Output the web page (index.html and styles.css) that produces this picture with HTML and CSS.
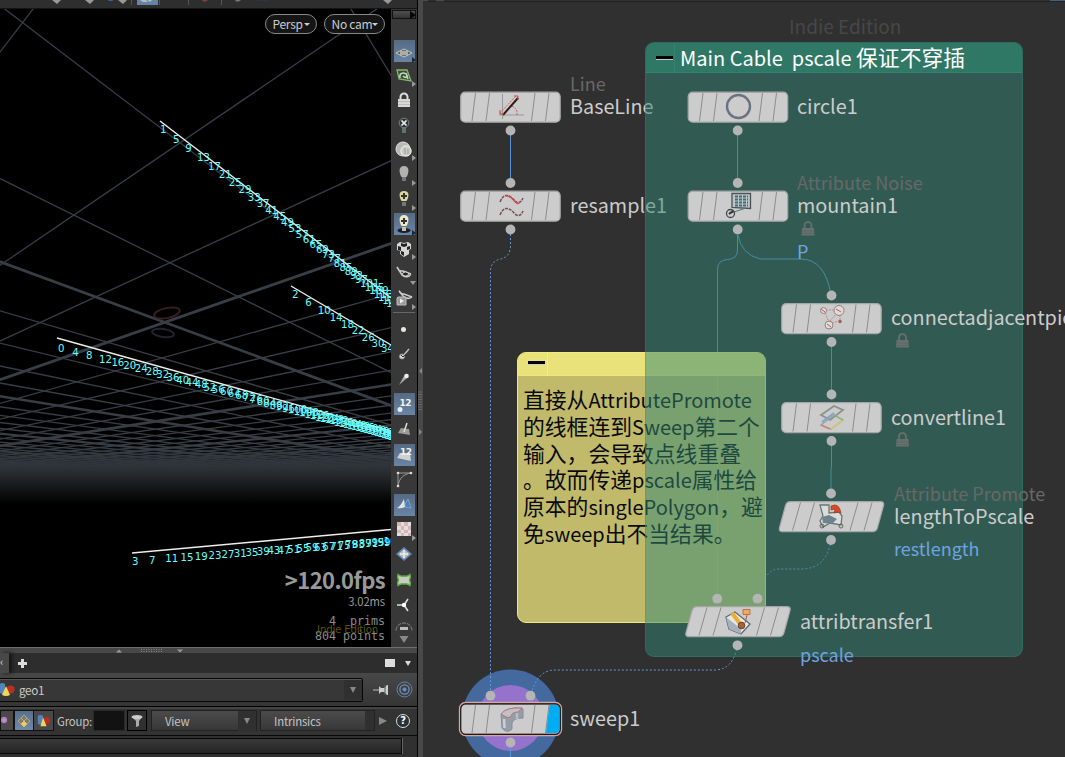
FILE: index.html
```html
<!DOCTYPE html>
<html lang="zh-CN">
<head>
<meta charset="utf-8">
<title>geo1</title>
<link rel="stylesheet" href="styles.css">
</head>
<body>
<main class="app">
<section class="left">
  <header class="topstrip">
    <svg width="418" height="9" viewBox="0 0 418 9">
      <g fill="#999"><path d="M52 0h9l-4 4z"/><path d="M85 0h9l-4 4z"/><path d="M118 0h9l-4 4z"/><path d="M383 0h9l-4 4z"/></g>
      <path d="M108 0h6l-2 1h-3z" fill="#38639a"/><path d="M202 0h6l-2 1.500h-3z" fill="#8a3c38"/><path d="M235 0h6l-2 1.500h-3z" fill="#777"/><path d="M254 0h14" stroke="#2c3d4b"/>
      <rect x="137" y="0" width="21" height="5" fill="#6484aa"/><path d="M140 0h6l2 2h-5zM147 0h5l-2 2z" fill="#b9bcb5"/>
      <path d="M131.500 0v5M159.500 0v5M188.500 0v5M221.500 0v5" stroke="#555"/>
      <path d="M372 0h10v1h-10z" fill="#25333d"/>
    </svg>
  </header>
  <div class="scene">
    <div class="viewport">
      <svg id="grid" class="grid" width="391" height="638" viewBox="0 9 391 638"></svg>
      <div class="cams"><span class="pill">Persp<i></i></span><span class="pill wide">No cam<i></i></span></div>
      <div class="stats">
        <div class="fps">&gt;120.0fps</div>
        <div class="ms">3.02ms</div>
        <div class="counts"><span>4&nbsp; prims</span><span>804 points</span><em>Indie Edition</em></div>
      </div>
    </div>
    <aside class="tools">
      <div class="expand"><i></i></div>
      <div class="group first">
        <div class="t on"><svg viewBox="0 0 24 24"><path d="M4 14l8-4 8 4-8 4z" fill="#505c62" stroke="#c8c9bd"/><path d="M8 14l4-2 4 2-4 2zM8 12l8 4M16 12l-8 4" stroke="#d5d6ca" fill="none" stroke-width=".8"/></svg><b></b></div>
        <div class="t"><svg viewBox="0 0 24 24"><path d="M5 6l10 0 4 11-12-2z" fill="#365130" stroke="#85b66c" stroke-width="1.300"/><path d="M8 14c-1-5 3-6 6-4s0 5-3 2M14 9l2 6" fill="none" stroke="#c8d3c8" stroke-width="1.500"/></svg><b></b></div>
        <div class="t"><svg viewBox="0 0 24 24"><path d="M8.500 12V9a3.500 3.500 0 0 1 7 0v3" fill="none" stroke="#ddd" stroke-width="2"/><path d="M6 11h12v8H6z" fill="#d9d8d4"/><path d="M6 13.500h12M6 16.500h12" stroke="#bbb"/></svg></div>
        <div class="t"><svg viewBox="0 0 24 24"><circle cx="12" cy="10" r="4.800" fill="#303638" stroke="#738080"/><path d="M9.500 7.500l5 5m0-5l-5 5" stroke="#eee" stroke-width="1.700"/><path d="M10 15h4v5h-4z" fill="#667070"/></svg></div>
        <div class="t"><svg viewBox="0 0 24 24"><circle cx="11" cy="11" r="7" fill="#b6bbb7" stroke="#e2e4df"/><circle cx="14" cy="13" r="5.200" fill="#c8cdc7" stroke="#f0f0e8"/><path d="M13 10v6m3-5v5" stroke="#999"/></svg><b></b></div>
        <div class="t"><svg viewBox="0 0 24 24"><path d="M12 4c-6 0-5 7-2.500 11h5C17 11 18 4 12 4z" fill="#b2b3ad"/><path d="M10 15h4v4h-4z" fill="#777"/></svg><b></b></div>
        <div class="t"><svg viewBox="0 0 24 24"><path d="M12 4c-6 0-5 6-2.500 10h5C17 10 18 4 12 4z" fill="#d9d99a"/><path d="M12 6v6m-3-3h6" stroke="#333" stroke-width="2"/><path d="M10 15h4v4h-4z" fill="#777"/></svg><b></b></div>
        <div class="t on"><svg viewBox="0 0 24 24"><ellipse cx="12" cy="18.500" rx="6.500" ry="2.500" fill="#17202b"/><path d="M12 3c-6 0-5 7-2.500 11h5C17 10 18 3 12 3z" fill="#eee9c5"/><path d="M12 6v6m-3-3h6" stroke="#333" stroke-width="2"/><path d="M10 15h4v4h-4z" fill="#c9c5a9"/></svg><b></b></div>
        <div class="t"><svg viewBox="0 0 24 24"><path d="M5 7l3-2 4 1 4-1 3 2v5l-2 1v4l-5 3-4-3v-3l-3-1z" fill="#d6d6d2"/><path d="M9 6l3 1 3-1v3l-3 1-3-1zM6 9l3 1v4l-3-1zM18 9l-3 1v3l3-1zM9 14l3 1v4l-3-2z" fill="#222"/></svg><b></b></div>
        <div class="t"><svg viewBox="0 0 24 24"><path d="M5 6l5 8c3 3 7 2 9-1M5 6c2 5 5 4 6 4l8 3" fill="none" stroke="#c9c9c4" stroke-width="1.600"/><ellipse cx="13.500" cy="13" rx="3" ry="2" fill="#222" stroke="#ddd"/></svg><b class="down"></b></div>
        <div class="t"><svg viewBox="0 0 24 24"><path d="M7 5l4 5c3 3 6 3 9 1M7 5c2 3 4 3 5 3l8 3" fill="none" stroke="#ccc" stroke-width="1.500"/><path d="M5 12l1-1h8v8H5z" fill="#999" stroke="#bbb"/><path d="M8 12.500l4 2.500-4 2.500z" fill="#eee"/></svg><b></b></div>
      </div>
      <hr>
      <div class="group second">
        <div class="t"><svg viewBox="0 0 24 24"><circle cx="11.500" cy="12.500" r="2.500" fill="#e8e8e0"/></svg></div>
        <div class="t"><svg viewBox="0 0 24 24"><path d="M11 14l6-7" stroke="#bbb" stroke-width="1.500"/><circle cx="10" cy="14.500" r="2.500" fill="#ddd" stroke="#999"/><path d="M9 13l2 2 3-3" stroke="#333" fill="none"/></svg></div>
        <div class="t"><svg viewBox="0 0 24 24"><path d="M7 18l5-9 3 2z" fill="#aaa"/><circle cx="14.500" cy="9" r="2.300" fill="#f0f0e8"/></svg></div>
        <div class="t on"><svg viewBox="0 0 24 24"><text x="7.500" y="13.500" class="ic">12</text><circle cx="8" cy="17.500" r="2.500" fill="#eee"/></svg></div>
        <div class="t"><svg viewBox="0 0 24 24"><path d="M9 11l8 1 1 6-12-2z" fill="#9b9c98"/><path d="M12 15l3-9" stroke="#ddd" stroke-width="1.500"/></svg></div>
        <div class="t on"><svg viewBox="0 0 24 24"><path d="M8 11h10l1 8-14-3z" fill="#d0d0cc"/><text x="8" y="12.500" class="ic">12</text></svg></div>
        <div class="t"><svg viewBox="0 0 24 24"><path d="M6 19V6h13M6 19C7 11 12 7 19 6" fill="none" stroke="#999"/><g fill="#ddd"><circle cx="6" cy="6" r="1.300"/><circle cx="6" cy="19" r="1.300"/><circle cx="19" cy="6" r="1.300"/></g></svg></div>
        <div class="t on"><svg viewBox="0 0 24 24"><path d="M5 16q3-1 7-9l1 8q-4 2-8 1z" fill="#e4e4e0"/><path d="M13 12l3-5 3 9-6-1z" fill="#4d7fc0" stroke="#9dbbdc" stroke-width=".6"/></svg></div>
        <div class="t"><svg viewBox="0 0 24 24"><path d="M5 5h14v14H5z" fill="#dde0e2"/><path d="M5 5h4v4H5zM12 5h4v4h-4zM9 9h3v4H9zM16 9h3v4h-3zM5 13h4v3H5zM12 13h4v3h-4zM9 16h3v3H9zM16 16h3v3h-3z" fill="#dcb3ae"/></svg><b></b></div>
        <div class="t"><svg viewBox="0 0 24 24"><path d="M5 12l7-6 7 6-7 6z" fill="#b8bab4" stroke="#5a83b6" stroke-width="1.400"/><path d="M12 8v8M8 12h8" stroke="#eee" stroke-width="1.500"/></svg></div>
        <div class="t"><svg viewBox="0 0 24 24"><path d="M6 6.500q3 2.500 6 1.500 3 1 6-1.500 1 2-.5 5.500 1.500 3.500 .5 5.500-3-2.500-6-1.500-3-1-6 1.500-1-2 .5-5.500-1.500-3.500-.5-5.500z" fill="#c8cac4" stroke="#67ad43" stroke-width="1.500"/></svg></div>
        <div class="t"><svg viewBox="0 0 24 24"><path d="M12 12l4-6M12 12l4 6M12 12H5" stroke="#ddd" stroke-width="1.600"/><circle cx="12" cy="12" r="2.200" fill="#fff"/></svg></div>
        <div class="t"><svg viewBox="0 0 24 24"><path d="M4 12.500a8 7.500 0 0 1 16 0" fill="none" stroke="#888" stroke-dasharray="4 1"/><path d="M8 9h8v3H8z" fill="#bbb"/><path d="M7.500 18h9l-4.500 7z" fill="#888"/></svg></div>
      </div>
    </aside>
  </div>
  <div class="split"><svg width="100" height="6" viewBox="0 0 100 6"><path d="M1 4.500h6l-3-3zM62 1.500h6l-3 3z" fill="#999"/><path d="M26 1.500h21M26 3.500h21M26 5.500h21" stroke="#888" stroke-dasharray="1 1.500"/></svg></div>
  <div class="tabs"><span class="tab">‹</span><span class="plus"></span><span class="max"></span><span class="tri"></span></div>
  <div class="pathrow">
    <div class="path"><svg width="15" height="16" viewBox="0 0 15 16"><path d="M0 2q2-2 5 0v9q-2 2-5 0z" fill="#5384bb"/><circle cx="10.500" cy="7.500" r="4" fill="#b83022"/><path d="M6 4l4 9q-4 2-8 0z" fill="#f1d759"/></svg><span>geo1</span><i class="drop"></i></div>
    <svg class="pin" width="18" height="14" viewBox="0 0 18 14"><path d="M0 7h7" stroke="#bbb"/><path d="M6 3l2 2h3l3-3h1v10h-1l-3-3H8l-2 2z" fill="#ccc"/><path d="M12 2v10" stroke="#555"/></svg>
    <svg width="17" height="17" viewBox="0 0 17 17" fill="none" stroke="#5d85b7"><circle cx="8.500" cy="8.500" r="7.500"/><circle cx="8.500" cy="8.500" r="4.600" stroke="#768fac" stroke-width="1.300"/><circle cx="8.500" cy="8.500" r="1.700" fill="#5c9be4"/></svg>
  </div>
  <div class="grouprow">
    <span class="sq one"><svg width="8" height="12" viewBox="0 0 8 12"><circle cx="3" cy="5" r="2.500" fill="#aaa" stroke="#b675bb" stroke-width="1.500"/></svg></span>
    <span class="sq sel"><svg width="16" height="16" viewBox="0 0 16 16"><path d="M2 8l6-6 6 6-6 6z" fill="#847d5c" stroke="#aaa78f"/><path d="M5 5l6 6M11 5l-6 6" stroke="#aaa"/><path d="M5 11l3-3 3 3-3 3z" fill="#f2cd58"/></svg></span>
    <span class="sq two"><svg width="15" height="14" viewBox="0 0 15 16"><path d="M1 2q3-2 6 0v9q-3 2-6 0z" fill="#5384bb"/><circle cx="11" cy="7.500" r="4" fill="#b83022"/><path d="M7 4l4 10H4z" fill="#f1d759"/></svg></span>
    <label>Group:</label><span class="field"></span>
    <span class="filter"><svg width="12" height="14" viewBox="0 0 12 14"><path d="M1 3l4 4v6l3-1V7l3-4z" fill="#aaa"/><ellipse cx="6" cy="3" rx="5.500" ry="2" fill="#ccc"/></svg></span>
    <span class="combo">View<i class="drop"></i></span>
    <span class="combo intr">Intrinsics</span>
    <i class="play"></i><span class="help">?</span>
  </div>
  <div class="sheet"><div></div></div>
</section>
<div class="divider"><svg width="5" height="757" viewBox="0 0 5 757"><path d="M4 368v6l-3-3zM1 429l3 3-3 3z" fill="#888"/><path d="M1 391.500v20M3 391.500v20" stroke="#888" stroke-dasharray="1 1.500"/></svg></div>
<section class="network">
  <svg class="layer" viewBox="423 0 642 757">
    <path d="M423 .5h642" stroke="#4a4a4a"/><path d="M428 1h8M444 1h621" stroke="#171717"/><path d="M1050 0h15v1h-15z" fill="#49607d"/>
    <text class="brand" x="789" y="34">Indie Edition</text>
    <circle cx="510.500" cy="718" r="48.500" fill="#44699f"/><circle cx="510.500" cy="718" r="33" fill="#9572cc"/>
    <g class="wire">
      <path d="M510.500 130v53M737.500 130v53"/>
      <path class="dot" d="M510.500 230v15q0 12-10 14t-10 13v423"/>
      <path d="M737.500 235v15q0 9-10 9.500t-10 10V599M738 235q3 19 22 24h41q24 0 30 36M831.500 342v52M831.500 441v25l-.5 3v24"/>
      <path class="dot" d="M831 540q-4 29-30 29h-22q-16 0-21 30M737.500 645q-4 25-23 25H555q-18 0-24 25"/>
      <path d="M510.500 742v15"/>
    </g>
    <text class="kind" x="570" y="91">Line</text><text class="name" x="570" y="114">BaseLine</text><text class="name" x="570" y="213">resample1</text>
  </svg>
  <article class="note yellow"><h2><i></i></h2><p>直接从<span>AttributePromote</span><br>的线框连到<span>Sweep</span>第二个<br>输入，会导致点线重叠<br>。故而传递<span>pscale</span>属性给<br>原本的<span>singlePolygon</span>，避<br>免<span>sweep</span>出不当结果。</p></article>
  <article class="note green"><h2><i></i><span>Main Cable&nbsp; pscale <b>保证不穿插</b></span></h2></article>
  <svg class="layer" viewBox="423 0 642 757">
    <defs>
      <g id="node"><rect x=".7" y=".7" width="99.500" height="30" rx="4.500" fill="#ccc" stroke="#a6a6a6" stroke-width="1.200"/><path d="M15.500 1.500l-3.500 28M29.500 1.500l-3.500 28M75 1.500l-3.500 28M89 1.500l-3.500 28" stroke="#8c8c8c" fill="none"/></g>
      <g id="slant"><path d="M12 .7h90q4 0 3 4l-6 22q-1 4-5 4H4q-4 0-3-4L7 4.500q1-3.800 5-3.800z" fill="#ccc" stroke="#a6a6a6" stroke-width="1.200"/><path d="M22 1.500l-8 28M36 1.500l-8 28M79.500 1.500l-8 28M93.500 1.500l-8 28" stroke="#8c8c8c" fill="none"/></g>
      <g id="lock"><path d="M3.500 7V4.500a3.500 3.500 0 0 1 7 0V7" fill="none" stroke="#626e68" stroke-width="2"/><path d="M1 7h12l.5 7.500H.5z" fill="#66706d"/><path d="M1 10h12M1 12.500h12" stroke="#5d6764"/></g>
    </defs>
    <use href="#node" x="460" y="91.500"/><use href="#node" x="460" y="190.500"/><use href="#node" x="687.500" y="91.500"/><use href="#node" x="687.500" y="190.500"/><use href="#node" x="781" y="303"/><use href="#node" x="781" y="402"/><use href="#slant" x="778.500" y="501"/><use href="#slant" x="685" y="606"/>
    <rect x="459.500" y="702.500" width="102" height="33" rx="6" fill="#1d1717" stroke="#dda4a0" stroke-width="1.300"/><use href="#node" x="460" y="703.500"/>
    <path d="M549.500 705H556q3.500 0 3.500 4v20q0 4-4 4h-9.500z" fill="#00adf4"/>
    <rect x="460.700" y="703.900" width="99.600" height="30.400" rx="5" fill="none" stroke="#1d1717" stroke-width="1.200"/>
    <g fill="#b5b5b5"><circle cx="510.500" cy="130.500" r="4.900"/><circle cx="510.500" cy="183" r="4.900"/><circle cx="510.500" cy="229.500" r="4.900"/><circle cx="737.700" cy="130.500" r="4.900"/><circle cx="737.700" cy="183" r="4.900"/><circle cx="737.700" cy="229.500" r="4.900"/><circle cx="831.500" cy="295.500" r="4.900"/><circle cx="831.500" cy="342" r="4.900"/><circle cx="831.500" cy="394.500" r="4.900"/><circle cx="831.500" cy="441" r="4.900"/><circle cx="831" cy="493.500" r="4.900"/><circle cx="831" cy="540" r="4.900"/><circle cx="717.300" cy="598.700" r="4.900"/><circle cx="757.500" cy="598.700" r="4.900"/><circle cx="737.500" cy="645.300" r="4.900"/><circle cx="490.500" cy="695.700" r="4.900"/><circle cx="530.500" cy="695.700" r="4.900"/><circle cx="510.500" cy="742.500" r="4.900"/></g>
    <g fill="none">
      <path d="M502.500 94v25M499 115h25" stroke="#999"/><path d="M500 113l16-17M512 106q6 3 5 9" stroke="#cf5c5c" stroke-dasharray="2 1"/><path d="M503 115l15-17" stroke="#31191b" stroke-width="2"/><path d="M500 110v4h4M514 96h4v4" stroke="#ba4c50"/>
      <path d="M500 202q3-7 7-6.500t8 5.500q5 4 8-3M500 215q3-7 7-6.500t8 5.500q5 4 8-3" stroke="#7a5052" stroke-width="1.500" stroke-dasharray="3 1"/><path d="M506 195.500q4 .5 8 5t5 2.500" stroke="#cd4b4d" stroke-width="1.300"/>
      <circle cx="738.500" cy="106.500" r="11.500" stroke="#6c7280" stroke-width="2.400"/>
      <path d="M732 193.500h18.500v15l-18.500-1z" fill="#b9c7ca" stroke="#4b5357" stroke-width="1.300"/><path d="M735 196.500h13M735 199.500h13M735 202.500h13M735 205.500h13" stroke="#4c6970" stroke-width="2" stroke-dasharray="3 1"/><path d="M731 213l15-5" stroke="#59747a"/><circle cx="730.500" cy="213.500" r="4" stroke="#44494b" stroke-width="1.300"/><path d="M729 214l4-3" stroke="#333" stroke-width="2"/>
      <g stroke="#8b8585" fill="#dedbd9"><circle cx="823.500" cy="310.500" r="3"/><circle cx="839" cy="310.500" r="5"/><circle cx="829" cy="325" r="4"/></g><circle cx="840" cy="321.500" r="1.700" fill="#9b5c55"/><path d="M826 310h8M825 313l4 9M840 315v5M830 321l6-7M832 323l7-2" stroke="#c68683" stroke-dasharray="2 1"/><path d="M821 309l4 3M836 309l5 3M827 324l4 3" stroke="#bf5c58"/>
      <path d="M821 415l13-9 9 4-13 10z" stroke="#8b918b" stroke-width="1.800"/><path d="M821 425l13-10 9 5-12 9z" stroke="#9ca29c" stroke-width="1.300"/><path d="M822 422l12-9" stroke="#7ea4cf" stroke-width="1.700"/><path d="M821 425l9 4" stroke="#cf817b" stroke-width="1.600"/><path d="M831 429l12-9" stroke="#d0c66e" stroke-width="1.600"/><path d="M834 415l9 5" stroke="#86b278" stroke-width="1.300"/>
      <path d="M820 505h9v8l10-1 3 4-1 9-11-2-7 4-3-6 3-5z" fill="#d9dddb" stroke="#6a7578" stroke-width="1.300"/><path d="M822 517l7-2 8 4-5 5-9-1z" fill="#72828a"/><path d="M831 506q8-4 10 7l-3-1-4 1 1-4-4 1z" fill="#dc4826" stroke="#88412d" stroke-width=".7"/><circle cx="822" cy="526" r="2" stroke="#666"/><circle cx="841" cy="526" r="2" stroke="#666"/>
      <path d="M726 617l9-5 15 12-9 10-12-5z" fill="#e6e8e5" stroke="#5e6970" stroke-width="1.300"/><path d="M726 617l3 12 12 5v-5z" fill="#a6b1ba"/><path d="M732 613l9 12" stroke="#eaae35" stroke-width="4"/><circle cx="741.500" cy="625.500" r="3.300" fill="#a96237" stroke="#69412d"/><path d="M743 609.500h7v5h-7z" fill="#e4ad6d" stroke="#cc6c35"/><path d="M747 615l-2 8" stroke="#a15836"/>
      <path d="M501 714q5-7 21-6l1 1v9q-10 0-11 5v6q-4 4-8 1l-2-2z" fill="#949da8" stroke="#858d97"/><path d="M501 714q5-7 21-6l-4 4q-6 0-7 4t-10-2z" fill="#bcc2c8" stroke="#cb6972" stroke-width=".9"/><path d="M504 719l.5 9" stroke="#ccd0d6" stroke-width="2.500"/><path d="M517 713v6" stroke="#b6bec6" stroke-width="2.500"/>
    </g>
    <use href="#lock" x="801" y="221"/><use href="#lock" x="895.500" y="333"/><use href="#lock" x="895.500" y="432"/>
    <text class="name" x="797" y="114">circle1</text><text class="kind" x="797" y="190">Attribute Noise</text><text class="name" x="797" y="213">mountain1</text><text class="attr" x="797" y="259">P</text>
    <text class="name" x="891" y="325">connectadjacentpieces1</text><text class="name" x="891" y="425">convertline1</text>
    <text class="kind" x="894" y="501">Attribute Promote</text><text class="name" x="894" y="524">lengthToPscale</text><text class="attr" x="894" y="556">restlength</text>
    <text class="name" x="800" y="629">attribtransfer1</text><text class="attr" x="800" y="662">pscale</text><text class="name" x="570" y="726">sweep1</text>
  </svg>
</section>
</main>
<script src="scene.js"></script>
</body>
</html>
```
FILE: styles.css
```css
* { box-sizing: border-box; }
body { margin: 0; background: #303030; font-family: "Noto Sans CJK SC", "Noto Sans", sans-serif; overflow: hidden; }
svg { display: block; }
.app { display: flex; width: 1065px; height: 757px; overflow: hidden; }
.left { width: 418px; height: 757px; border-right: 1px solid #000; background: #2d2d2d; flex: none; }
.topstrip { height: 9px; background: #2e2e2e; border-bottom: 1px solid #141414; overflow: hidden; }
.scene { display: flex; height: 638px; }
.viewport { width: 391px; background: #000; position: relative; }
.grid { position: absolute; left: 0; top: 0; }
.pt { font: 10.200px "DejaVu Sans", sans-serif; fill: #66ffff; }
.cams { position: relative; display: flex; justify-content: flex-end; gap: 7px; padding: 5px 6px 0 0; }
.pill { width: 52px; height: 20px; border: 1px solid #888; border-radius: 10px; background: #151515; color: #ccc; font-size: 12px; letter-spacing: -.3px; line-height: 17px; padding: 0 6px 0 6.500px; display: flex; justify-content: space-between; white-space: nowrap; }
.pill.wide { width: 61px; }
.pill i { border: 3px solid transparent; border-top-color: #ccc; margin-top: 8px; height: 3px; }
.stats { position: absolute; right: 6px; bottom: 3px; text-align: right; color: #999; }
.fps { font-weight: 700; font-size: 22px; letter-spacing: -.55px; line-height: 28px; white-space: nowrap; }
.ms { font-size: 11.300px; letter-spacing: -.15px; line-height: 17px; }
.counts { position: relative; font: 11.650px/15px "DejaVu Sans Mono", monospace; padding-top: 4px; color: #8b8b8b; }
.counts span { display: block; }
.counts em { position: absolute; right: 7px; top: 12px; font: 10.200px/16px "DejaVu Sans", sans-serif; letter-spacing: -.2px; color: #59540f; white-space: nowrap; }
.tools { width: 26px; background: #383838; }
.expand { height: 9px; margin: 1px 1px 0 1px; border: 1px solid #111; background: linear-gradient(#505050, #333); }
.expand i { display: block; border: 4px solid transparent; border-left: 6px solid #050505; width: 0; margin-left: 17px; }
.group { display: flex; flex-direction: column; }
.first { margin-top: 20px; }
.t { position: relative; height: 24.700px; padding-left: 1px; }
.second .t { height: 25.100px; }
.t.on { background: linear-gradient(#566a84, #6a84a6) center / 21px 22px no-repeat; margin-left: 2px; padding: 0; width: 23px; }
.t svg { width: 24px; height: 24px; overflow: visible; }
.t.on svg { margin-left: -1px; }
.t b { position: absolute; right: 0; bottom: 1px; border: 3.500px solid transparent; border-left: 4px solid #999; width: 0; margin-right: 1px; border-right: 0; }
.t.on b { border-left-color: #1d2835; right: -1px; }
.t b.down { border: 3.500px solid transparent; border-top: 4px solid #999; border-bottom: 0; }
.ic { font: bold 9px "DejaVu Sans", sans-serif; fill: #f2f2e8; letter-spacing: -.5px; }
.tools hr { border: 0; border-top: 1px solid #666; margin: 1px 2px 4px; }
.split { height: 6px; border-top: 1px solid #6d6d6d; background: #484848; padding-left: 115px; overflow: hidden; }
.tabs { height: 20px; display: flex; align-items: center; background: #2d2d2d; color: #ddd; }
.tab { width: 9px; height: 20px; background: #484848; font-size: 11px; box-shadow: 3px 0 4px #151515; overflow: hidden; }
.plus { width: 9px; height: 9px; margin-left: 9px; background: linear-gradient(#ddd, #ddd) center / 9px 3px no-repeat, linear-gradient(#ddd, #ddd) center / 3px 9px no-repeat; }
.max { width: 10px; height: 8px; background: #ddd; margin-left: auto; margin-right: 10px; }
.tri { border: 3.500px solid transparent; border-top: 5px solid #ddd; border-bottom: 0; margin-right: 6px; }
.pathrow { height: 34px; background: linear-gradient(#484848, #353535); border-bottom: 1px solid #000; display: flex; align-items: center; }
.path { width: 363px; height: 24px; border: 1px solid #050505; border-left: 0; border-radius: 0 2px 2px 0; background: #373737; box-shadow: inset 0 1px #555; display: flex; align-items: center; color: #ccc; font-size: 11.700px; letter-spacing: -.3px; line-height: 20px; }
.path span { margin-left: 4px; }
.drop { margin-left: auto; width: 18px; height: 20px; background: #303030; display: flex; justify-content: center; align-items: center; }
.drop::after { content: ""; border: 3.500px solid transparent; border-top: 6px solid #888; border-bottom: 0; }
.pin { margin: 0 5px 0 10px; }
.grouprow { height: 29px; background: #333; border-top: 2px solid #444; border-bottom: 1px solid #080808; display: flex; align-items: center; font-size: 11.400px; letter-spacing: -.2px; color: #c4c4c4; padding-bottom: 3px; }
.sq { height: 21px; border: 1px solid #111; background: #494949; display: flex; align-items: center; justify-content: center; }
.one { width: 14px; justify-content: flex-start; }
.sel { width: 20px; background: linear-gradient(#56708d, #7089a7); }
.two { width: 20px; border-left: 0; }
.grouprow label { margin-left: 3px; width: 36px; white-space: nowrap; font-size: 11.400px; }
.field { width: 32px; height: 21px; background: #121212; border: 1px solid #292929; }
.filter { width: 20px; height: 21px; border: 1px solid #000; background: #303030; margin-left: 2px; display: flex; align-items: center; justify-content: center; }
.combo { width: 106px; height: 21px; margin-left: 4px; border: 1px solid #222; background: linear-gradient(#4b4b4b, #383838); display: flex; align-items: center; padding-left: 13px; }
.combo + .combo { margin-left: 3px; }
.intr { background: linear-gradient(90deg, transparent 104px, #303030 104px), linear-gradient(#4b4b4b, #383838); width: 115px; }
.play { border: 4px solid transparent; border-left: 8px solid #888; border-right: 0; margin-left: 4px; }
.help { width: 14px; height: 14px; border: 1.500px solid #ddd; border-radius: 50%; background: #273138; color: #fff; font: bold 10px/11px "DejaVu Sans", sans-serif; text-align: center; margin-left: auto; margin-right: 7px; }
.sheet { height: 21px; padding: 2px 15px 0 0; background: #303030; }
.sheet div { height: 16px; border: 1px solid #080808; border-left: 0; background: linear-gradient(#393939, #252525); box-shadow: 1px 0 #666; }
.divider { width: 5px; background: #494949; flex: none; }
.network { width: 642px; height: 757px; position: relative; background: #303030; overflow: hidden; }
.layer { position: absolute; left: 0; top: 0; width: 642px; height: 757px; }
.wire path { fill: none; stroke: #5a92d8; stroke-width: 1; }
.wire .dot { stroke-dasharray: 2 2; stroke: #6499dc; }
.name { font-size: 19.800px; fill: #ccc; }
.kind { font-size: 18px; fill: #686868; }
.attr { font-size: 18px; fill: #6fa3e0; }
.brand { font-size: 19px; fill: #474747; }
.note { position: absolute; border-radius: 9px; overflow: hidden; }
.note h2 { margin: 0; display: flex; font-weight: 400; }
.note h2 i { width: 27px; display: flex; align-items: center; justify-content: center; }
.note h2 i::after { content: ""; width: 17px; height: 3px; background: #050505; border-bottom: 1px solid #ccc; box-sizing: content-box; }
.yellow { left: 94px; top: 352px; width: 249px; height: 271px; background: rgba(210, 202, 114, .9); border: 1px solid #f0ea7c; }
.yellow h2 { height: 23px; background: #e9e27b; border-bottom: 1px solid #eee77e; }
.yellow h2 i { padding-left: 8px; border-right: 1px solid #f5ee83; width: 30px; padding-bottom: 2px; }
.yellow p { margin: 10px 0 0 5px; font-size: 21.800px; line-height: 26.800px; white-space: nowrap; color: #0a0a0a; }
.yellow p span { font-size: 20px; line-height: 1px; }
.green { left: 222px; top: 42px; width: 378px; height: 615px; background: rgba(50, 134, 116, .5); border: 1px solid rgba(48, 150, 120, .3); }
.green h2 { height: 30px; background: #307866; border-bottom: 1px solid #338370; font-size: 20px; line-height: 29px; color: #fff; }
.green h2 i { padding-left: 8px; width: 29px; border-right: 1px solid #338370; }
.green h2 span { margin-left: 5px; white-space: pre; }
.green h2 b { font-weight: 400; font-size: 21.800px; line-height: 1px; }
```
FILE: scene.js
```js
const svg = document.getElementById("grid");
const HORIZON = 500;
const parts = [];
const line = (x1, y1, x2, y2, color, w) =>
  parts.push(`<line x1="${x1}" y1="${y1}" x2="${x2}" y2="${y2}" stroke="${color}" stroke-width="${w}"/>`);

// Ground plane: two families of parallel lines, each meeting at its own vanishing point.
for (let i = -3; i <= 170; i++) {
  const bold = i % 5 === 0;
  const depth = HORIZON + 20;
  const w = bold ? Math.max(1.3, 2.8 - i * 0.05) : 1.3;
  const a = 2.72 + 0.705 * i;
  line(648, HORIZON, 648 - a * depth, HORIZON - depth, "#373e46", w);
  const b = 2.87 + 0.7 * i;
  line(-345, HORIZON, -345 + b * depth, HORIZON - depth, "#373e46", w);
}
parts.push(`<defs><linearGradient id="fog" x1="0" y1="0" x2="0" y2="1">
<stop offset="0" stop-color="#2e3338" stop-opacity="0"/><stop offset=".35" stop-color="#2e3338" stop-opacity=".95"/>
<stop offset=".5" stop-color="#26292d"/><stop offset=".75" stop-color="#121415"/><stop offset="1" stop-color="#000"/></linearGradient></defs>
<rect x="0" y="446" width="391" height="58" fill="url(#fog)"/>`);
parts.push(`<g fill="none" stroke-width="2"><ellipse cx="167" cy="313" rx="13" ry="5" stroke="#35201f" transform="rotate(-12 167 313)"/>
<ellipse cx="163" cy="333" rx="11" ry="4" stroke="#25222f" transform="rotate(8 163 333)"/></g>`);

const strands = [
  { first: 0, x: 58, y: 352, step: 14.6, c: 0.0235, slope: 0.267, edge: [57, 338, 391, 431] },
  { first: 1, x: 160, y: 133, step: 13.3, c: 0.0265, slope: 0.77, edge: [160, 121, 391, 298] },
  { first: 2, x: 292, y: 298, step: 13.6, c: 0.028, slope: 0.61, edge: [291, 286, 391, 345] },
  { first: 3, x: 132, y: 565, step: 17.6, c: 0.03, slope: -0.078, edge: [132, 553, 391, 529.500] },
];
for (const s of strands) {
  line(...s.edge, "#eee", 1.4);
  for (let n = 0; n < 50; n++) {
    const dx = (s.step * n) / (1 + s.c * n);
    if (s.x + dx > 388) break;
    parts.push(`<text class="pt" x="${s.x + dx}" y="${s.y + dx * s.slope}">${s.first + 4 * n}</text>`);
  }
}
svg.innerHTML = parts.join("");
```
